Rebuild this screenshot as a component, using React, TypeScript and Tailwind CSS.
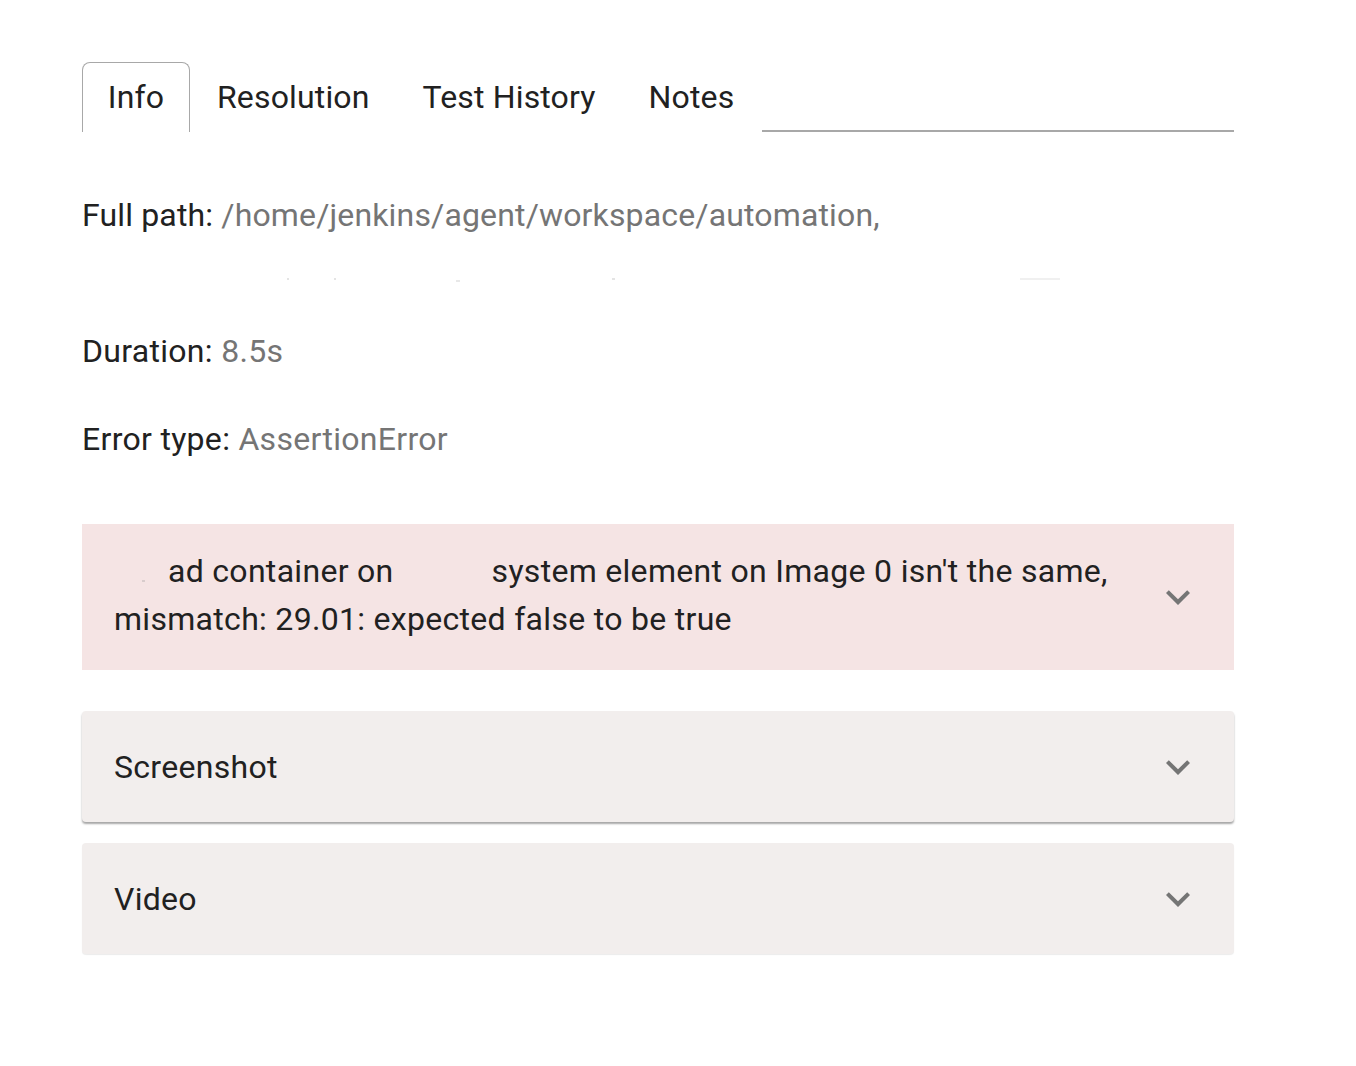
import React from "react";

function Chevron() {
  return (
    <svg width="48" height="48" viewBox="0 0 24 24" className="shrink-0">
      <path d="M7.41 8.59 12 13.17l4.59-4.58L18 10l-6 6-6-6z" fill="#757575" />
    </svg>
  );
}

export default function App() {
  return (
    <div className="min-h-[1066px] w-[1356px] bg-white text-[#212121] tracking-[0.3px]" style={{ fontFamily: "Roboto, 'Noto Sans', sans-serif" }}>
      <div className="ml-[82px] w-[1152px] pt-[62px]">
        <div className="flex items-end h-[70px] tracking-[0.15px]">
          <div className="h-[70px] w-[108px] border-[1.5px] border-b-0 border-[#a8a8a8] rounded-t-[8px] flex items-center justify-center text-[32px] pb-[1px]">
            Info
          </div>
          <div className="flex items-center h-[70px] text-[32px] pb-[1px]">
            <span className="ml-[27px]">Resolution</span>
            <span className="ml-[53px]">Test History</span>
            <span className="ml-[53px]">Notes</span>
          </div>
          <div className="flex-1 ml-[28px] h-[2px] bg-[#a8a8a8]" />
        </div>

        <div className="mt-[65px] text-[32px] leading-[36px]">
          <div className="tracking-[0.15px]">
            Full path: <span className="text-[#757575]">/home/jenkins/agent/workspace/automation,</span>
          </div>
          <div className="h-[36px] mt-[19px] flex items-end">
            <span className="ml-[205px] mb-[8px] w-[2px] h-[2px] bg-[#e4e4e4]" />
            <span className="ml-[45px] mb-[8px] w-[2px] h-[2px] bg-[#e4e4e4]" />
            <span className="ml-[120px] mb-[6px] w-[4px] h-[2px] bg-[#e8e8e8]" />
            <span className="ml-[152px] mb-[8px] w-[3px] h-[2px] bg-[#e4e4e4]" />
            <span className="ml-[405px] mb-[8px] w-[40px] h-[2px] bg-[#f0f0f0]" />
          </div>
          <div className="mt-[45px]">
            Duration: <span className="text-[#757575]">8.5s</span>
          </div>
          <div className="mt-[52px]">
            Error type: <span className="text-[#757575]">AssertionError</span>
          </div>
        </div>

        <div className="mt-[67px] bg-[#f5e4e4] h-[146px] flex items-center pl-[32px] pr-[32px]">
          <div className="flex-1 text-[32px] leading-[48px] pb-[5px]">
            <div>
              <span className="inline-block w-[28px]" />
              <span className="inline-block w-[3px] h-[2px] bg-[#d8cccc] align-baseline" />
              <span className="inline-block w-[23px]" />ad container on<span className="inline-block w-[98px]" />system element on Image 0 isn't the same,
            </div>
            <div>mismatch: 29.01: expected false to be true</div>
          </div>
          <Chevron />
        </div>

        <div className="mt-[41px] bg-[#f2eeed] h-[111px] rounded-[4px] shadow-[0_2px_2px_rgba(0,0,0,0.35)] flex items-center pl-[32px] pr-[32px]">
          <div className="flex-1 text-[32px]">Screenshot</div>
          <Chevron />
        </div>

        <div className="mt-[21px] bg-[#f2eeed] h-[111px] rounded-[4px] shadow-[0_1px_1px_rgba(0,0,0,0.08)] flex items-center pl-[32px] pr-[32px]">
          <div className="flex-1 text-[32px]">Video</div>
          <Chevron />
        </div>
      </div>
    </div>
  );
}
